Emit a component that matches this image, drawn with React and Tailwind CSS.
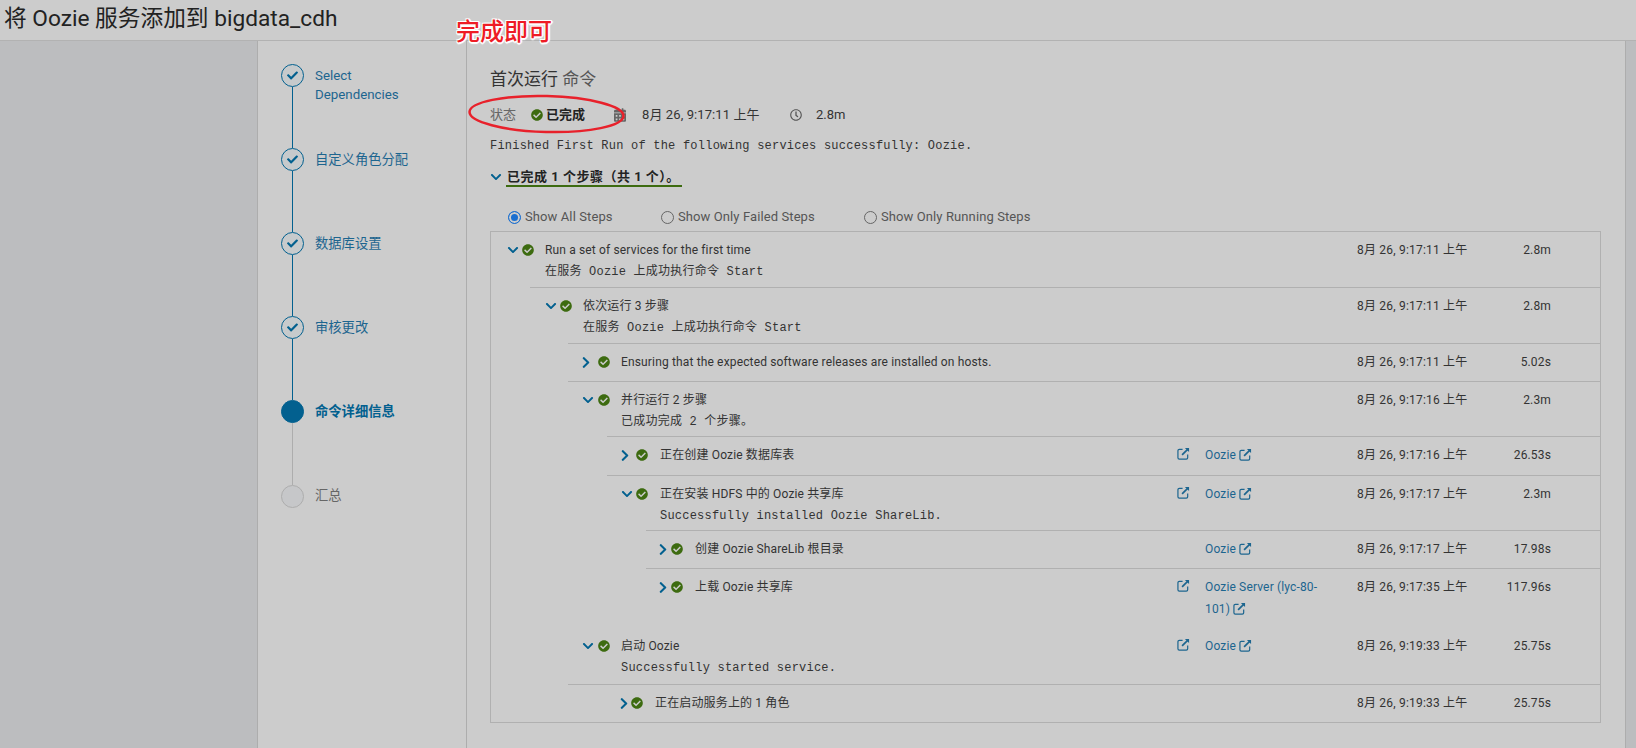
import { FaCheck, FaCheckCircle, FaChevronDown, FaChevronRight, FaCalendarAlt, FaRegClock } from "react-icons/fa";

const sans = "font-['Roboto','Noto_Sans_CJK_SC',sans-serif]";

const steps = [
  { label: "Select Dependencies", state: "done", h: "h-[84px]", pt: "pt-[2px]" },
  { label: "自定义角色分配", state: "done", h: "h-[84px]", pt: "pt-[2px]" },
  { label: "数据库设置", state: "done", h: "h-[84px]", pt: "pt-[2px]" },
  { label: "审核更改", state: "done", h: "h-[84px]", pt: "pt-[2px]" },
  { label: "命令详细信息", state: "active", h: "h-[85px]", pt: "pt-[2px]" },
  { label: "汇总", state: "todo", h: "h-[23px]", pt: "pt-[1px]" },
];

const rows = [
  { h: "h-[55px]", ml: "ml-0", pl: "pl-[16px]", box: "w-[15px]", tm: "ml-[11px]", open: true, title: "Run a set of services for the first time", sub: "在服务 Oozie 上成功执行命令 Start", time: "8月 26, 9:17:11 上午", dur: "2.8m", noBorder: true },
  { h: "h-[56px]", ml: "ml-[39px]", pl: "pl-[15px]", box: "w-[15px]", tm: "ml-[11px]", open: true, title: "依次运行 3 步骤", sub: "在服务 Oozie 上成功执行命令 Start", time: "8月 26, 9:17:11 上午", dur: "2.8m" },
  { h: "h-[38px]", ml: "ml-[77px]", pl: "pl-[14px]", box: "w-[16px]", tm: "ml-[11px]", title: "Ensuring that the expected software releases are installed on hosts.", time: "8月 26, 9:17:11 上午", dur: "5.02s" },
  { h: "h-[55px]", ml: "ml-[77px]", pl: "pl-[14px]", box: "w-[16px]", tm: "ml-[11px]", open: true, title: "并行运行 2 步骤", sub: "已成功完成 2 个步骤。", time: "8月 26, 9:17:16 上午", dur: "2.3m" },
  { h: "h-[39px]", ml: "ml-[116px]", pl: "pl-[14px]", box: "w-[15px]", tm: "ml-[12px]", title: "正在创建 Oozie 数据库表", ext: true, link: "Oozie", time: "8月 26, 9:17:16 上午", dur: "26.53s" },
  { h: "h-[55px]", ml: "ml-[116px]", pl: "pl-[14px]", box: "w-[15px]", tm: "ml-[12px]", open: true, title: "正在安装 HDFS 中的 Oozie 共享库", sub: "Successfully installed Oozie ShareLib.", ext: true, link: "Oozie", time: "8月 26, 9:17:17 上午", dur: "2.3m" },
  { h: "h-[38px]", ml: "ml-[155px]", pl: "pl-[13px]", box: "w-[12px]", tm: "ml-[12px]", title: "创建 Oozie ShareLib 根目录", link: "Oozie", time: "8月 26, 9:17:17 上午", dur: "17.98s" },
  { h: "h-[60px]", ml: "ml-[155px]", pl: "pl-[13px]", box: "w-[12px]", tm: "ml-[12px]", title: "上载 Oozie 共享库", ext: true, link: "Oozie Server (lyc-80-101)", time: "8月 26, 9:17:35 上午", dur: "117.96s" },
  { h: "h-[56px]", ml: "ml-[77px]", pl: "pl-[14px]", box: "w-[16px]", tm: "ml-[11px]", open: true, title: "启动 Oozie", sub: "Successfully started service.", ext: true, link: "Oozie", time: "8月 26, 9:19:33 上午", dur: "25.75s", noBorder: true },
  { h: "h-[38px]", ml: "ml-[77px]", pl: "pl-[52px]", box: "w-[11px]", tm: "ml-[12px]", title: "正在启动服务上的 1 角色", time: "8月 26, 9:19:33 上午", dur: "25.75s" },
];

const radioClass =
  "h-[13px] w-[13px] appearance-none rounded-full border border-[#666] bg-[#ccc] checked:border-[#1a6fd0] checked:bg-[#1a6fd0] checked:shadow-[inset_0_0_0_2px_#ccc]";

function ExtIcon({ className }) {
  return (
    <svg viewBox="0 0 14 14" className={className} fill="none" stroke="currentColor">
      <path d="M6 2.5H2.5A1.5 1.5 0 0 0 1 4v7.5A1.5 1.5 0 0 0 2.5 13H10a1.5 1.5 0 0 0 1.5-1.5V8" strokeWidth="1.3" />
      <path d="M5.5 8.5 12 2" strokeWidth="1.8" />
      <path d="M8.5 1H13v4.5z" fill="currentColor" stroke="none" />
    </svg>
  );
}

function Step({ step, last }) {
  const done = step.state === "done";
  const active = step.state === "active";
  return (
    <div className={`flex ${step.h}`}>
      <div className="flex w-[23px] flex-col items-center">
        <div
          className={`flex h-[23px] w-[23px] shrink-0 items-center justify-center rounded-full border ${
            active ? "border-[#02608f] bg-[#02608f]" : done ? "border-[#02608f] bg-[#c6cacc]" : "border-[#adadad] bg-[#c6c7c9]"
          }`}
        >
          {done && <FaCheck className="h-[11px] w-[11px] text-[#02608f]" />}
        </div>
        {!last && <div className={`w-px flex-1 ${done ? "bg-[#02608f]" : "bg-[#adadad]"}`} />}
      </div>
      <div
        className={`ml-[11px] w-[110px] text-[13.3px] leading-[19px] ${step.state === "todo" ? "text-[#666]" : "text-[#1c658f]"} ${
          active ? "font-bold text-[#02608f]" : ""
        } ${step.pt}`}
      >
        {step.label}
      </div>
    </div>
  );
}

function Row({ row }) {
  return (
    <div className={`flex ${row.h} ${row.ml} ${row.noBorder ? "" : "border-t border-[#b0b0b0]"}`}>
      <div className={`flex min-w-0 flex-1 ${row.pl} pt-[9px]`}>
        <div className="flex h-[18px] items-center">
          <div className={`${row.box} flex items-center`}>
            {row.open ? (
              <FaChevronDown className="h-[12px] w-[12px] text-[#02608f]" />
            ) : (
              <FaChevronRight className="h-[13px] w-[8px] text-[#02608f]" />
            )}
          </div>
          <FaCheckCircle className="h-[12px] w-[12px] text-[#3d6b10]" />
        </div>
        <div className={`${row.tm} text-[#333]`}>
          <div className="text-[12px] leading-[18px] tracking-[0.15px] whitespace-nowrap">{row.title}</div>
          {row.sub && (
            <div className="mt-[3px] font-['Liberation_Mono','Noto_Sans_CJK_SC',monospace] text-[12px] leading-[21px] tracking-[0.22px] whitespace-pre">
              {row.sub}
            </div>
          )}
        </div>
      </div>
      <div className="flex w-[28px] shrink-0 justify-start pt-[10px]">
        {row.ext && <ExtIcon className="h-[13px] w-[13px] text-[#1c658f]" />}
      </div>
      <div className="w-[152px] shrink-0 pt-[7px] pr-[26px] text-[12px] leading-[22px] tracking-[0.15px] text-[#1c658f]">
        {row.link && (
          <span>
            {row.link} <ExtIcon className="inline h-[13px] w-[13px] align-[-2px]" />
          </span>
        )}
      </div>
      <div className="w-[125px] shrink-0 pt-[9px] text-[12px] leading-[18px] tracking-[0.2px] whitespace-nowrap text-[#333]">{row.time}</div>
      <div className="w-[69px] shrink-0 pt-[9px] text-right text-[12px] leading-[18px] tracking-[0.15px] text-[#333]">{row.dur}</div>
      <div className="w-[49px] shrink-0" />
    </div>
  );
}

export default function App() {
  return (
    <div className={`relative flex h-screen flex-col overflow-hidden bg-[#cccccc] ${sans}`}>
      {/* Header */}
      <header className="h-[41px] shrink-0 border-b border-[#b2b2b2] pl-[4px] text-[22.7px] leading-[38px] text-[#222]">
        将 Oozie 服务添加到 bigdata_cdh
      </header>

      <div className="flex min-h-0 flex-1">
        <aside className="w-[258px] shrink-0 border-r border-[#adadad] bg-[#bcbdbf]" />

        {/* Wizard steps */}
        <nav className="w-[209px] shrink-0 border-r border-[#adadad] pt-[23px] pl-[23px]">
          {steps.map((s, i) => (
            <Step key={s.label} step={s} last={i === steps.length - 1} />
          ))}
        </nav>

        {/* Main content */}
        <main className="min-w-0 flex-1 pt-[26px] pl-[23px]">
          <h2 className="text-[17px] leading-[24px] text-[#333]">
            首次运行 <span className="text-[#555]">命令</span>
          </h2>

          <div className="mt-[14px] flex h-[20px] items-center text-[13px] text-[#333]">
            <span className="w-[41px] text-[#666]">状态</span>
            <FaCheckCircle className="h-[12px] w-[12px] text-[#3d6b10]" />
            <span className="ml-[3px] w-[68px] font-bold text-[#222]">已完成</span>
            <FaCalendarAlt className="h-[14px] w-[12px] text-[#666]" />
            <span className="ml-[16px] w-[148px] whitespace-nowrap tracking-[0.1px]">8月 26, 9:17:11 上午</span>
            <FaRegClock className="h-[12px] w-[12px] text-[#555]" />
            <span className="ml-[14px]">2.8m</span>
          </div>

          <div className="mt-[11px] h-[20px] font-['Liberation_Mono',monospace] text-[12px] leading-[20px] tracking-[0.22px] text-[#333]">
            Finished First Run of the following services successfully: Oozie.
          </div>

          <div className="mt-[11px] flex h-[20px] items-center">
            <FaChevronDown className="h-[12px] w-[12px] text-[#02608f]" />
            <div className="relative ml-[4px] h-[20px] w-[176px] border-b-2 border-[#3d6b10] pl-[1px] text-[13px] leading-[20px] font-bold tracking-[0.5px] whitespace-pre text-[#222]">
              已完成 1 个步骤（共 1 个）。
            </div>
          </div>

          <div className="mt-[20px] flex h-[20px] items-center text-[13px] tracking-[0.1px] text-[#555]">
            <label className="ml-[18px] flex w-[153px] items-center">
              <input type="radio" name="steps" defaultChecked className={radioClass} />
              <span className="ml-[4px]">Show All Steps</span>
            </label>
            <label className="flex w-[203px] items-center">
              <input type="radio" name="steps" className={radioClass} />
              <span className="ml-[4px]">Show Only Failed Steps</span>
            </label>
            <label className="flex items-center">
              <input type="radio" name="steps" className={radioClass} />
              <span className="ml-[4px]">Show Only Running Steps</span>
            </label>
          </div>

          {/* Steps table */}
          <div className="mt-[4px] w-[1111px] border border-[#b0b0b0]">
            {rows.map((r, i) => (
              <Row key={i} row={r} />
            ))}
          </div>
        </main>

        <div className="w-[11px] shrink-0 border-l border-[#adadad] bg-[#bcbdbf]" />
      </div>

      {/* Red annotations drawn on top of the screenshot */}
      <div className="absolute top-[17px] left-[456px] text-[24px] leading-[30px] font-medium text-[#ee1c25] [text-shadow:-1px_-1px_0_#fff,1px_-1px_0_#fff,-1px_1px_0_#fff,1px_1px_0_#fff,0_2px_1px_#fff,2px_0_1px_#fff]">
        完成即可
      </div>
      <svg className="absolute top-[92px] left-[465px] h-[44px] w-[163px]" viewBox="0 0 163 44" fill="none">
        <ellipse cx="81.5" cy="22" rx="77" ry="18" stroke="#e8212b" strokeWidth="2.5" transform="rotate(1.5 81.5 22)" />
      </svg>
    </div>
  );
}
